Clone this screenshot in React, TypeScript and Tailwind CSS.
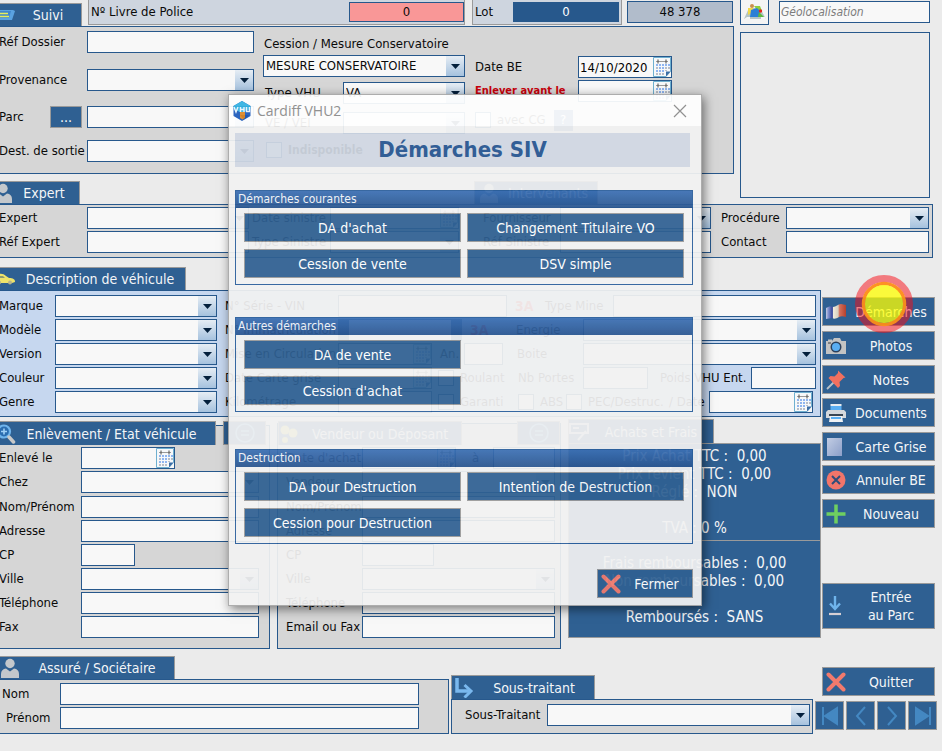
import type { ReactNode } from "react";

type Kids = { children?: ReactNode };
type Cls = { className?: string };

/* ---------- icons ---------- */

function PersonIcon({ className = "" }: Cls) {
  return (
    <svg viewBox="0 0 20 20" className={`h-5 w-5 shrink-0 ${className}`} fill="#c4c8cc">
      <circle cx="10" cy="5.5" r="4.7" />
      <path d="M1 20v-4c0-3 2-5 5-5.4l4 3 4-3c3 .4 5 2.400 5 5.400v4z" />
    </svg>
  );
}

function SuiviIcon() {
  return (
    <svg viewBox="0 0 20 14" className="-ml-1 h-3.5 w-5 shrink-0">
      <path d="M0 2h18l2 1-3 9H0z" fill="#5aa2e0" />
      <path d="M0 3h16l-2 7H0z" fill="#3f86cc" />
      <path d="M0 5.500h13M0 8.500h14" stroke="#e6ee5a" strokeWidth="1.300" />
    </svg>
  );
}

function CarIcon() {
  return (
    <svg viewBox="0 0 22 12" className="-ml-1.5 h-3 w-[22px] shrink-0">
      <path d="M0 5c3-4 9-6 13-2l3 2c4 0 6 1 6 4l-3 1H0z" fill="#eee36a" />
      <path d="M5 3h5l2 2H4z" fill="#8d9a72" />
      <circle cx="17" cy="9.500" r="2" fill="#b9b48a" />
      <circle cx="6" cy="9.500" r="2" fill="#b9b48a" />
    </svg>
  );
}

function SearchIcon() {
  return (
    <svg viewBox="0 0 20 20" className="-ml-1 h-5 w-5 shrink-0" fill="none">
      <circle cx="8" cy="7.500" r="6" stroke="#6fb4ec" strokeWidth="2.200" fill="#2b6db0" />
      <path d="M5 7.500h6M8 4.500v6" stroke="#9fd0f6" strokeWidth="1.600" />
      <path d="M13 13l4.500 5" stroke="#c9c9c9" strokeWidth="3.500" strokeLinecap="round" />
    </svg>
  );
}

function CalendarIcon() {
  return (
    <svg viewBox="0 0 18 20" className="h-5 w-[18px] shrink-0">
      <path d="M.5.5h17v14l-4.500 5H.5z" fill="#f6f8fa" stroke="#6fb0d0" />
      <path d="M3 4.500h12" stroke="#9a9a9a" />
      <path d="M5 2.500v4M13 2.500v4" stroke="#4a4a4a" />
      <path d="M3 7h2v2H3zM6 7h2v2H6zM9 7h2v2H9zM12 7h2v2h-2zM15 7h2v2h-2zM6 10h2v2H6zM9 10h2v2H9zM3 13h2v2H3zM6 13h2v2H6zM9 13h2v2H9z" fill="#8fb5f0" />
      <path d="M3 10h2v2H3zM12 10h2v2h-2zM15 10h2v2h-2zM12 13h2v1h-2zM3 16h2v2H3zM6 16h2v2H6zM9 16h2v2H9z" fill="#b8bec8" />
      <path d="M17.500 14.500h-4.500v5z" fill="#3c6ea6" />
    </svg>
  );
}

function CrossIcon() {
  return (
    <svg viewBox="0 0 20 20" className="h-5 w-5 shrink-0">
      <path d="M2.500 2.500l15 15M17.500 2.500l-15 15" stroke="#f27a6d" strokeWidth="4" strokeLinecap="round" />
    </svg>
  );
}

function EqualIcon() {
  return (
    <svg viewBox="0 0 20 20" className="h-5 w-5" fill="none" stroke="#6fb4ec" strokeWidth="1.600">
      <circle cx="10" cy="10" r="9" />
      <path d="M6 8h8M6 12h8" />
    </svg>
  );
}

function FlagIcon() {
  return (
    <svg viewBox="0 0 20 20" className="h-5 w-5 shrink-0">
      <defs>
        <linearGradient id="flag" x1="0" y1="0" x2="1" y2="0">
          <stop offset="0" stopColor="#c4cbe4" />
          <stop offset="0.120" stopColor="#8090cc" />
          <stop offset="0.320" stopColor="#34449a" />
          <stop offset="0.360" stopColor="#f2ecdc" />
          <stop offset="0.600" stopColor="#d8d0c0" />
          <stop offset="0.680" stopColor="#d4705c" />
          <stop offset="1" stopColor="#b4402e" />
        </linearGradient>
      </defs>
      <path d="M0 6c2-1 4-2 7-1 3 0 5-3 8-3l5 1v12c-3-1-5-1-7 0-3 2-5 2-7 1l-6 1z" fill="url(#flag)" />
    </svg>
  );
}

function CameraIcon() {
  return (
    <svg viewBox="0 0 20 20" className="h-5 w-5 shrink-0">
      <path d="M0 5h2V3.500h4V5l2-3h6l1.500 3H20v13H0z" fill="#c3c3c3" />
      <circle cx="10" cy="11" r="5.500" fill="#2b405c" />
      <circle cx="10" cy="11" r="4" fill="#5aaef2" />
      <path d="M2 7h3" stroke="#6a6a6a" strokeWidth="1.500" />
    </svg>
  );
}

function PinIcon() {
  return (
    <svg viewBox="0 0 20 20" className="h-5 w-5 shrink-0">
      <path d="M7.500 12.500L1 19" stroke="#b8c0c8" strokeWidth="1.800" />
      <path d="M12 .5l7.500 7-2 .5-4 4 .5 4-2 2L2.500 8l2-2 4 .5L12 3z" fill="#f2705f" />
    </svg>
  );
}

function PrinterIcon() {
  return (
    <svg viewBox="0 0 20 20" className="h-5 w-5 shrink-0">
      <path d="M4.500 1h11v2h-11z" fill="#e9edf1" />
      <path d="M4.500 3h11v5h-11z" fill="#5aaef2" />
      <path d="M2 7h16l2 2v6H0V9z" fill="#d5d8dc" />
      <path d="M3 11h14v2H3z" fill="#3a4654" />
      <path d="M4 13h12l1 6H3z" fill="#eef1f4" />
      <path d="M5 15h10" stroke="#5aaef2" strokeWidth="2" />
    </svg>
  );
}

function CardIcon() {
  return (
    <svg viewBox="0 0 20 20" className="h-5 w-5 shrink-0">
      <defs>
        <linearGradient id="card" x1="0" y1="0" x2="1" y2="1">
          <stop offset="0" stopColor="#c2cde4" />
          <stop offset="1" stopColor="#8c9fc8" />
        </linearGradient>
      </defs>
      <rect x="1" y="1" width="15" height="18" fill="url(#card)" />
    </svg>
  );
}

function CancelIcon() {
  return (
    <svg viewBox="0 0 20 20" className="h-5 w-5 shrink-0">
      <circle cx="10" cy="10" r="9.500" fill="#f2756a" />
      <path d="M6 6l8 8M14 6l-8 8" stroke="#2f4d7a" strokeWidth="2" />
    </svg>
  );
}

function PlusIcon() {
  return (
    <svg viewBox="0 0 20 20" className="h-5 w-5 shrink-0">
      <path d="M10 .5v19M.5 10h19" stroke="#6fcf60" strokeWidth="3.500" />
    </svg>
  );
}

function DownIcon() {
  return (
    <svg viewBox="0 0 20 20" className="h-5 w-5 shrink-0" fill="none">
      <path d="M9 0v12M4 7.500l5 5.500 5-5.500" stroke="#6fb4ec" strokeWidth="2.400" />
      <path d="M3 18h12" stroke="#d6cfd4" strokeWidth="2.200" />
    </svg>
  );
}

function SubIcon() {
  return (
    <svg viewBox="0 0 20 20" className="h-5 w-5 shrink-0" fill="none" stroke="#7ab8ee">
      <path d="M3 0v13h13" strokeWidth="3.500" />
      <path d="M10.500 7l6.500 6-6.500 6.500" strokeWidth="3" />
    </svg>
  );
}

function MapIcon() {
  return (
    <svg viewBox="0 0 24 18" className="h-[18px] w-6">
      <path d="M6 5L1 16h22L17 5z" fill="#b4c4c6" />
      <path d="M4 14h3v2H1zM18 14h4l1 2h-5z" fill="#f6f6f6" />
      <path d="M5 5h5v4l-5 3z" fill="#f0d84a" />
      <path d="M11 3h6l2 5-5-1z" fill="#8ccf3c" />
      <path d="M8 7l6-2 3 3-1 6H7z" fill="#2a7fd6" />
      <path d="M16 9l5 5h-6z" fill="#5cb83c" />
      <circle cx="9" cy="3" r="2" fill="#c98f4c" />
      <circle cx="17.500" cy="8" r="1.700" fill="#e8261c" />
    </svg>
  );
}

function VendorIcon() {
  return (
    <svg viewBox="0 0 20 20" className="h-5 w-5 shrink-0" fill="#e6dc5a">
      <circle cx="6" cy="6" r="4.500" />
      <circle cx="14" cy="9" r="4.500" />
      <circle cx="6" cy="16" r="3" />
    </svg>
  );
}

function ReceiptIcon() {
  return (
    <svg viewBox="0 0 20 20" className="h-5 w-5 shrink-0" fill="none" stroke="#c9d4e0" strokeWidth="2">
      <path d="M1 2h18v9H1zM4 6h6M9 18l8-9" />
    </svg>
  );
}

/* ---------- form parts ---------- */

const box = "h-[22px] min-w-0 border border-[#27588c] bg-[#f8f8f8]";

function Input({ className = "", value = "" }: Cls & { value?: string }) {
  return <input type="text" defaultValue={value} className={`${box} px-1 outline-none ${className}`} />;
}

function Combo({ className = "", value = "" }: Cls & { value?: string }) {
  return (
    <span className={`relative flex ${box} ${className}`}>
      <select className="w-full appearance-none bg-transparent pl-0.5 outline-none">
        <option>{value}</option>
      </select>
      <span className="pointer-events-none absolute inset-y-0 right-0 flex w-[18px] items-center justify-center bg-linear-to-b from-[#e6edf4] to-[#a6c2de]">
        <svg viewBox="0 0 9 5" className="h-[5px] w-[9px]" fill="#04203c">
          <path d="M0 0h9L4.500 5z" />
        </svg>
      </span>
    </span>
  );
}

function DateInput({ className = "", value = "" }: Cls & { value?: string }) {
  return (
    <span className={`flex items-center ${box} ${className}`}>
      <input
        type="text"
        defaultValue={value}
        className="h-full w-0 min-w-0 flex-1 bg-transparent pl-px text-black outline-none"
      />
      <CalendarIcon />
    </span>
  );
}

function Labeled({ text, className = "", children }: Kids & Cls & { text: string }) {
  return (
    <label className="contents">
      <span className={`shrink-0 whitespace-nowrap ${className}`}>{text}</span>
      {children}
    </label>
  );
}

function Check({ text, className = "" }: Cls & { text: string }) {
  return (
    <label className={`flex items-center gap-1.5 whitespace-nowrap ${className}`}>
      <input type="checkbox" className="h-4 w-4 shrink-0 appearance-none border border-[#27588c] bg-[#f8f8f8]" />
      {text}
    </label>
  );
}

function Row({ className = "", children }: Kids & Cls) {
  return <div className={`flex h-[22px] items-center ${className}`}>{children}</div>;
}

function Tab({ icon, className = "", children }: Kids & Cls & { icon?: ReactNode }) {
  return (
    <h2
      className={`flex items-center overflow-hidden border border-b-0 border-[#9a9a9a] bg-[#2f6092] text-[14px] leading-5 whitespace-nowrap text-[#f4f6f8] ${className}`}
    >
      {icon}
      <span className="flex-1 text-center">{children}</span>
    </h2>
  );
}

function SideButton({ icon, className = "", children }: Kids & Cls & { icon: ReactNode }) {
  return (
    <button
      type="button"
      className={`flex w-[113px] items-center border border-[#9a9a9a] bg-[#2f6092] pl-[3px] text-[14px] leading-[18px] text-[#f4f6f8] ${className}`}
    >
      {icon}
      <span className="flex-1 pl-0.5 text-center whitespace-nowrap">{children}</span>
    </button>
  );
}

function NavButton({ label, children }: Kids & { label: string }) {
  return (
    <button
      type="button"
      aria-label={label}
      className="flex h-[29px] w-[29px] items-center justify-center border border-[#9a9a9a] bg-[#2f6092]"
    >
      <svg viewBox="0 0 20 20" className="h-5 w-5" fill="none" stroke="#4488c2" strokeWidth="2">
        {children}
      </svg>
    </button>
  );
}

/* ---------- dialog ---------- */

function Group({ title, className = "", children }: Kids & Cls & { title: string }) {
  return (
    <fieldset className={`border border-[#2b5f9c] ${className}`}>
      <legend className="float-left h-[17px] w-full bg-linear-to-b from-[#3c70b4] to-[#2a5690] pl-0.5 text-[12px] leading-4 text-[#f0f3f8]">
        {title}
      </legend>
      <div className="clear-both grid grid-cols-2 gap-x-1.5 gap-y-[7px] px-2 pt-[5px] pb-1.5">{children}</div>
    </fieldset>
  );
}

function DialogButton({ children }: Kids) {
  return (
    <button type="button" className="h-[29px] border border-[#9a9a9a] bg-[#2f6092] text-[14px] leading-5 text-white">
      {children}
    </button>
  );
}

function Dialog() {
  return (
    <section
      role="dialog"
      aria-label="Cardiff VHU2"
      className="absolute top-[94px] left-[228px] w-[474px] border border-[#a8a8a8] bg-[#f2f2f2] opacity-93 shadow-[2px_3px_10px_rgba(0,0,0,0.550)]"
    >
      <header className="flex h-[31px] items-center bg-white pr-3.5 pl-[3px]">
        <svg viewBox="0 0 20 20" className="h-5 w-5">
          <path d="M10 0l8.500 5v10L10 20l-8.500-5V5z" fill="#1f5cbc" />
          <path d="M10 0l8.500 5v3L10 12 1.500 8V5z" fill="#34b4e4" />
          <path d="M8 11h5v6l-2.500 1.500L8 17z" fill="#e08a28" />
          <path d="M2 6l2 5 2-5M8.500 6v5M8.500 8.500H12M12 6v5M14.500 6v4.500h3V6" stroke="#e8f4fc" strokeWidth="1.400" fill="none" />
        </svg>
        <span className="flex-1 pl-[5px] font-['Open_Sans','Noto_Sans',sans-serif] text-[14px] leading-5 text-[#8c8c8c]">
          Cardiff VHU2
        </span>
        <button type="button" aria-label="Fermer la fenêtre">
          <svg viewBox="0 0 14 14" className="h-3.5 w-3.5" stroke="#8c8c8c" strokeWidth="1.200">
            <path d="M1 1l12 12M13 1L1 13" />
          </svg>
        </button>
      </header>
      <div className="pt-[7px] pr-2 pb-[7px] pl-1.5">
        <h1 className="mr-[3px] h-[34px] bg-[#d2d9e4] text-center text-[22px] leading-[34px] font-bold text-[#265592]">
          Démarches SIV
        </h1>
        <Group title="Démarches courantes" className="mt-[23px]">
          <DialogButton>DA d'achat</DialogButton>
          <DialogButton>Changement Titulaire VO</DialogButton>
          <DialogButton>Cession de vente</DialogButton>
          <DialogButton>DSV simple</DialogButton>
        </Group>
        <Group title="Autres démarches" className="mt-8">
          <DialogButton>DA de vente</DialogButton>
          <span />
          <DialogButton>Cession d'achat</DialogButton>
        </Group>
        <Group title="Destruction" className="mt-[37px]">
          <DialogButton>DA pour Destruction</DialogButton>
          <DialogButton>Intention de Destruction</DialogButton>
          <DialogButton>Cession pour Destruction</DialogButton>
        </Group>
        <div className="mt-[25px] flex justify-end">
          <button
            type="button"
            className="flex h-[29px] w-24 items-center border border-[#9a9a9a] bg-[#2f6092] pl-[3px] text-[14px] text-white"
          >
            <CrossIcon />
            <span className="flex-1 text-center">Fermer</span>
          </button>
        </div>
      </div>
    </section>
  );
}

/* ---------- page sections ---------- */

const panel = "border border-[#27588c] bg-[#d6d6d6]";
const tag = "border border-[#9a9a9a] bg-[#ced5df]";

function SuiviSection() {
  return (
    <div className="min-w-0 flex-1">
      <div className="flex h-[26px] items-start">
        <Tab icon={<SuiviIcon />} className="mt-[3px] h-[23px] w-[84px]">
          Suivi
        </Tab>
        <div className={`ml-1.5 flex h-[25px] w-[377px] items-center border-t-0 pl-0.5 ${tag}`}>
          <span className="flex-1">Nº Livre de Police</span>
          <output className="h-5 w-[115px] border border-[#27588c] bg-[#f99797] text-center leading-[18px]">0</output>
        </div>
        <div className={`ml-[7px] flex h-[25px] w-[150px] items-center border-t-0 pr-0.5 pl-0.5 ${tag}`}>
          <span className="flex-1">Lot</span>
          <output className="h-5 w-[106px] bg-[#27588c] text-center leading-5 text-white">0</output>
        </div>
        <output className="mt-px ml-[5px] h-[22px] w-[106px] border border-[#27588c] bg-[#b1bccb] text-center leading-5">
          48 378
        </output>
      </div>

      <div className={`flex h-[148px] ${panel}`}>
        <div className="flex w-[255px] flex-col pt-1">
          <Row>
            <Labeled text="Réf Dossier" className="w-[88px]">
              <Input className="w-[167px]" />
            </Labeled>
          </Row>
          <Row className="mt-4">
            <Labeled text="Provenance" className="w-[88px]">
              <Combo className="w-[167px]" />
            </Labeled>
          </Row>
          <Row className="mt-[15px]">
            <span className="w-[51px]">Parc</span>
            <button
              type="button"
              aria-label="Choisir un parc"
              className="mr-[5px] h-[22px] w-8 border border-[#9a9a9a] bg-[#2f6092] text-[14px] leading-5 text-white"
            >
              ...
            </button>
            <Combo className="w-[167px]" />
          </Row>
          <Row className="mt-3">
            <Labeled text="Dest. de sortie" className="w-[88px]">
              <Combo className="w-[167px]" />
            </Labeled>
          </Row>
        </div>

        <div className="ml-[9px] w-[202px] pt-2">
          <label className="block">
            <span className="block h-5 pl-px leading-[18px]">Cession / Mesure Conservatoire</span>
            <Combo value="MESURE CONSERVATOIRE" />
          </label>
          <Row className="mt-[5px]">
            <Labeled text="Type VHU" className="w-20 pl-0.5">
              <Combo className="flex-1" value="VA" />
            </Labeled>
          </Row>
          <Row className="mt-2">
            <Labeled text="VE / VEI" className="w-20 pl-0.5">
              <Combo className="flex-1" />
            </Labeled>
          </Row>
          <Check text="Indisponible" className="mt-2 ml-[3px] text-[12px] font-bold" />
        </div>

        <div className="ml-2.5 w-[200px] pt-[29px]">
          <Row>
            <Labeled text="Date BE" className="w-[103px]">
              <DateInput className="w-[94px]" value="14/10/2020" />
            </Labeled>
          </Row>
          <Row className="mt-0.5">
            <Labeled text="Enlever avant le" className="w-[103px] text-[11px] font-bold text-[#c8000a]">
              <DateInput className="w-[94px]" />
            </Labeled>
          </Row>
          <Row className="mt-[7px]">
            <Check text="avec CG" />
            <button type="button" className="ml-2 h-[21px] w-[19px] bg-[#2f6092] text-white">
              ?
            </button>
          </Row>
        </div>
      </div>

      <div className="mt-[7px] flex h-[23px]">
        <Tab icon={<PersonIcon className="-ml-1.5" />} className="h-[23px] w-[82px] pr-1">
          Expert
        </Tab>
        <Tab icon={<PersonIcon className="ml-1" />} className="ml-[394px] h-[23px] w-[124px]">
          Intervenants
        </Tab>
      </div>
    </div>
  );
}

function MapSection() {
  return (
    <aside className="mr-3 ml-1.5 flex w-[190px] flex-col">
      <div className="flex h-[25px]">
        <button
          type="button"
          aria-label="Carte"
          className="flex h-[25px] w-[29px] items-center justify-center border border-t-0 border-[#27588c] bg-[#f4f4f4]"
        >
          <MapIcon />
        </button>
        <input
          type="text"
          aria-label="Géolocalisation"
          placeholder="Géolocalisation"
          className={`mt-px ml-2.5 flex-1 pl-px text-[12px] italic outline-none placeholder:text-[#7c7c7c] ${box}`}
        />
      </div>
      <div className="mt-[7px] h-[166px] border border-[#27588c]" />
    </aside>
  );
}

function ExpertPanel() {
  return (
    <div className={`mr-[9px] flex h-[54px] flex-col gap-0.5 pt-0.5 pr-[3px] ${panel}`}>
      <Row>
        <Labeled text="Expert" className="w-[88px]">
          <Combo className="w-[162px]" />
        </Labeled>
        <Labeled text="Date sinistre" className="w-[81px] pl-[3px]">
          <DateInput className="w-[129px]" />
        </Labeled>
        <Labeled text="Fournisseur" className="ml-4 w-[85px] pl-2">
          <Combo className="w-[151px]" />
        </Labeled>
        <Labeled text="Procédure" className="w-[75px] pl-2.5">
          <Combo className="flex-1" />
        </Labeled>
      </Row>
      <Row>
        <Labeled text="Réf Expert" className="w-[88px]">
          <Input className="w-[162px]" />
        </Labeled>
        <Labeled text="Type Sinistre" className="w-[81px] pl-[3px]">
          <Combo className="w-[129px]" />
        </Labeled>
        <Labeled text="Réf Sinistre" className="ml-4 w-[85px] pl-2">
          <Input className="w-[151px]" />
        </Labeled>
        <Labeled text="Contact" className="w-[75px] pl-2.5">
          <Input className="flex-1" />
        </Labeled>
      </Row>
    </div>
  );
}

function VehiclePanel() {
  return (
    <div className="mt-[9px]">
      <Tab icon={<CarIcon />} className="h-[23px] w-[188px]">
        Description de véhicule
      </Tab>
      <div className="flex h-[127px] flex-col gap-0.5 border border-[#27588c] bg-[#c6d7ef] pt-1 pr-1">
        <Row>
          <Labeled text="Marque" className="w-14">
            <Combo className="w-[162px]" />
          </Labeled>
          <Labeled text="N° Série - VIN" className="w-[121px] pl-2">
            <Input className="w-[169px]" />
          </Labeled>
          <b className="w-[38px] pl-2 text-[14px] text-[#e03030]">3A</b>
          <Labeled text="Type Mine" className="w-[68px]">
            <Input className="flex-1" />
          </Labeled>
        </Row>
        <Row>
          <Labeled text="Modèle" className="w-14">
            <Combo className="w-[162px]" />
          </Labeled>
          <Labeled text="N° Immatriculation" className="w-[121px] pl-2">
            <Input className="w-[124px] border-x-[11px]" />
          </Labeled>
          <b className="w-[54px] pl-2 text-[14px] text-[#e03030]">3A</b>
          <Labeled text="Energie" className="w-[67px]">
            <Combo className="flex-1" />
          </Labeled>
        </Row>
        <Row>
          <Labeled text="Version" className="w-14">
            <Combo className="w-[162px]" />
          </Labeled>
          <Labeled text="Mise en Circulation" className="w-[121px] pl-2">
            <DateInput className="w-[94px]" />
          </Labeled>
          <Labeled text="An." className="w-8 pl-2">
            <Input className="w-[39px]" />
          </Labeled>
          <Labeled text="Boite" className="ml-3.5 w-[66px]">
            <Combo className="flex-1" />
          </Labeled>
        </Row>
        <Row>
          <Labeled text="Couleur" className="w-14">
            <Combo className="w-[162px]" />
          </Labeled>
          <Labeled text="Date Carte grise" className="w-[121px] pl-2">
            <DateInput className="w-[94px]" />
          </Labeled>
          <Check text="Roulant" className="ml-1.5 w-[80px]" />
          <Labeled text="Nb Portes" className="w-[65px]">
            <Input className="w-[65px]" />
          </Labeled>
          <Labeled text="Poids VHU Ent." className="w-[103px] pl-3">
            <Input className="flex-1" />
          </Labeled>
        </Row>
        <Row>
          <Labeled text="Genre" className="w-14">
            <Combo className="w-[162px]" />
          </Labeled>
          <Labeled text="Kilométrage" className="w-[121px] pl-2">
            <Input className="w-[94px]" />
          </Labeled>
          <Check text="Garanti" className="ml-1.5 w-[80px]" />
          <Check text="ABS" className="w-12" />
          <Check text="PEC/Destruc." className="w-[103px]" />
          <Labeled text="/ Date" className="w-10">
            <DateInput className="mr-[3px] flex-1" />
          </Labeled>
        </Row>
      </div>
    </div>
  );
}

function PickupPanel() {
  return (
    <div className={`mt-1.5 w-[272px] pb-2.5 ${panel}`}>
      <div className="-mt-[5px] flex h-6">
        <Tab icon={<SearchIcon />} className="h-6 w-[217px] pr-2">
          Enlèvement / Etat véhicule
        </Tab>
        <button
          type="button"
          aria-label="Détail enlèvement"
          className="ml-[7px] flex w-[43px] items-center justify-center border border-[#9a9a9a] bg-[#2f6092]"
        >
          <EqualIcon />
        </button>
      </div>
      <div className="flex flex-col gap-0.5 pt-0.5 pr-2.5">
        <Row>
          <Labeled text="Enlevé le" className="w-[82px]">
            <DateInput className="w-[94px]" />
          </Labeled>
        </Row>
        <Row>
          <Labeled text="Chez" className="w-[82px]">
            <Combo className="flex-1" />
          </Labeled>
        </Row>
        <Row className="mt-px">
          <Labeled text="Nom/Prénom" className="w-[82px]">
            <Input className="flex-1" />
          </Labeled>
        </Row>
        <Row>
          <Labeled text="Adresse" className="w-[82px]">
            <Input className="flex-1" />
          </Labeled>
        </Row>
        <Row>
          <Labeled text="CP" className="w-[82px]">
            <Input className="w-[54px]" />
          </Labeled>
        </Row>
        <Row>
          <Labeled text="Ville" className="w-[82px]">
            <Combo className="flex-1" />
          </Labeled>
        </Row>
        <Row>
          <Labeled text="Téléphone" className="w-[82px]">
            <Input className="flex-1" />
          </Labeled>
        </Row>
        <Row>
          <Labeled text="Fax" className="w-[82px]">
            <Input className="flex-1" />
          </Labeled>
        </Row>
      </div>
    </div>
  );
}

function SellerPanel() {
  return (
    <div className={`mt-1 ml-[7px] w-[284px] pb-2.5 ${panel}`}>
      <div className="-mt-[3px] flex h-6">
        <Tab icon={<VendorIcon />} className="h-6 w-[184px]">
          Vendeur ou Déposant
        </Tab>
        <button
          type="button"
          aria-label="Détail vendeur"
          className="ml-auto flex w-[43px] items-center justify-center border border-[#9a9a9a] bg-[#2f6092]"
        >
          <EqualIcon />
        </button>
      </div>
      <div className="flex flex-col gap-0.5 pt-0.5 pr-[5px] pl-2">
        <Row>
          <Labeled text="Date d'achat" className="w-[76px]">
            <DateInput className="w-[94px]" />
          </Labeled>
          <Labeled text="à" className="w-[37px] pl-4">
            <Input className="flex-1" />
          </Labeled>
        </Row>
        <Row>
          <Labeled text="Vendeur" className="w-[76px]">
            <Combo className="flex-1" />
          </Labeled>
        </Row>
        <Row className="mt-px">
          <Labeled text="Nom/Prénom" className="w-[76px]">
            <Input className="flex-1" />
          </Labeled>
        </Row>
        <Row>
          <Labeled text="Adresse" className="w-[76px]">
            <Input className="flex-1" />
          </Labeled>
        </Row>
        <Row>
          <Labeled text="CP" className="w-[76px]">
            <Input className="w-[72px]" />
          </Labeled>
        </Row>
        <Row>
          <Labeled text="Ville" className="w-[76px]">
            <Combo className="flex-1" />
          </Labeled>
        </Row>
        <Row>
          <Labeled text="Téléphone" className="w-[76px]">
            <Input className="flex-1" />
          </Labeled>
        </Row>
        <Row>
          <Labeled text="Email ou Fax" className="w-[76px]">
            <Input className="flex-1" />
          </Labeled>
        </Row>
      </div>
    </div>
  );
}

function CostPanel() {
  return (
    <div className="ml-[7px] min-w-0 flex-1">
      <Tab icon={<ReceiptIcon />} className="h-6 w-[146px]">
        Achats et Frais
      </Tab>
      <div className="border border-[#9a9a9a] bg-[#2f6092] text-center text-[15px] leading-[18px] whitespace-pre text-[#f4f6f8]">
        <div className="h-[97px] border-b border-[#9a9a9a] pt-[3px]">
          <p>Prix Achat TTC :{"  "}0,00</p>
          <p>Prix revient TTC :{"  "}0,00</p>
          <p>Réglé :{"  "}NON</p>
          <p className="mt-[18px]">TVA : 0 %</p>
        </div>
        <div className="h-24 pt-[13px]">
          <p>Frais remboursables :{"  "}0,00</p>
          <p>Non remboursables :{"  "}0,00</p>
          <p className="mt-[18px]">Remboursés :{"  "}SANS</p>
        </div>
      </div>
    </div>
  );
}

function ActionColumn() {
  return (
    <div className="w-[121px] shrink-0 pt-[39px] pl-px">
      <div className="flex flex-col gap-[5px]">
        <div className="relative">
          <SideButton icon={<FlagIcon />} className="h-[29px]">
            Démarches
          </SideButton>
          <svg viewBox="0 0 60 60" className="pointer-events-none absolute -top-[23px] left-8 h-[60px] w-[60px]">
            <circle cx="30" cy="30" r="25.500" fill="none" stroke="#fa0a14" strokeOpacity="0.5" strokeWidth="7" />
            <circle cx="30" cy="30" r="20.500" fill="none" stroke="#ff8c18" strokeOpacity="0.950" strokeWidth="3.500" />
            <circle cx="30" cy="30" r="19" fill="#ffff00" fillOpacity="0.750" />
          </svg>
        </div>
        <SideButton icon={<CameraIcon />} className="h-[29px]">
          Photos
        </SideButton>
        <SideButton icon={<PinIcon />} className="h-[29px]">
          Notes
        </SideButton>
        <SideButton icon={<PrinterIcon />} className="-mt-px h-[29px]">
          Documents
        </SideButton>
        <SideButton icon={<CardIcon />} className="h-[29px]">
          Carte Grise
        </SideButton>
        <SideButton icon={<CancelIcon />} className="-mt-px h-[29px]">
          Annuler BE
        </SideButton>
        <SideButton icon={<PlusIcon />} className="h-[29px]">
          Nouveau
        </SideButton>
      </div>
      <SideButton icon={<DownIcon />} className="mt-[55px] h-[46px]">
        Entrée
        <br />
        au Parc
      </SideButton>
    </div>
  );
}

function BottomSection() {
  return (
    <div className="mt-[7px] flex items-start">
      <div className="w-[451px]">
        <Tab icon={<PersonIcon className="ml-px" />} className="h-[23px] w-[177px]">
          Assuré / Sociétaire
        </Tab>
        <div className={`flex h-[55px] flex-col gap-0.5 pt-[3px] ${panel}`}>
          <Row>
            <Labeled text="Nom" className="w-[61px] pl-[3px]">
              <Input className="w-[359px]" />
            </Labeled>
          </Row>
          <Row>
            <Labeled text="Prénom" className="w-[61px] pl-[7px]">
              <Input className="w-[359px]" />
            </Labeled>
          </Row>
        </div>
      </div>
      <div className="mt-[19px] ml-0.5 min-w-0 flex-1">
        <Tab icon={<SubIcon />} className="h-6 w-36 pl-0.5">
          Sous-traitant
        </Tab>
        <div className={`h-[35px] pt-1 pr-0.5 pl-[13px] ${panel}`}>
          <Row>
            <Labeled text="Sous-Traitant" className="w-[82px]">
              <Combo className="flex-1" />
            </Labeled>
          </Row>
        </div>
      </div>
      <div className="mt-[11px] mr-[5px] ml-0.5 w-[122px]">
        <SideButton icon={<CrossIcon />} className="ml-[7px] h-[29px]">
          Quitter
        </SideButton>
        <nav className="mt-[5px] flex gap-0.5">
          <NavButton label="Premier">
            <path d="M3 1v18" />
            <path d="M17 2v16L5 10z" fill="#4488c2" />
          </NavButton>
          <NavButton label="Précédent">
            <path d="M14 1l-8 9 8 9" />
          </NavButton>
          <NavButton label="Suivant">
            <path d="M6 1l8 9-8 9" />
          </NavButton>
          <NavButton label="Dernier">
            <path d="M17 1v18" />
            <path d="M3 2v16l12-8z" fill="#4488c2" />
          </NavButton>
        </nav>
      </div>
    </div>
  );
}

export default function App() {
  return (
    <main className="relative min-h-screen overflow-hidden bg-[#ebebeb] font-['DejaVu_Sans_Condensed','DejaVu_Sans','Noto_Sans',sans-serif] text-[13px] leading-4 text-[#0a0a0a]">
      <div className="-ml-0.5">
        <div className="flex">
          <SuiviSection />
          <MapSection />
        </div>
        <ExpertPanel />
        <div className="flex items-start">
          <div className="min-w-0 flex-1">
            <VehiclePanel />
            <div className="mt-0.5 flex items-start">
              <PickupPanel />
              <SellerPanel />
              <CostPanel />
            </div>
          </div>
          <ActionColumn />
        </div>
        <BottomSection />
      </div>
      <Dialog />
    </main>
  );
}
